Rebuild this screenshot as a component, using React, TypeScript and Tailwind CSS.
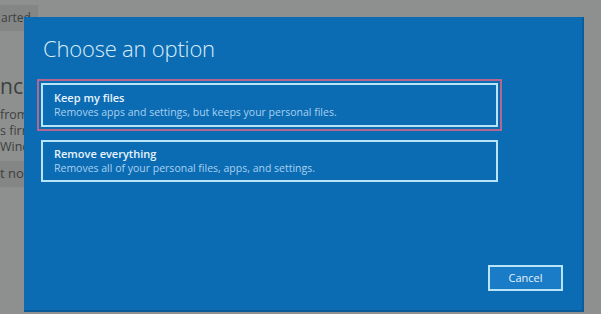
export default function App() {
  return (
    <div className="relative w-[601px] h-[314px] overflow-hidden bg-[#8d908f]" style={{ fontFamily: '"Open Sans", "Noto Sans", sans-serif' }}>
      {/* underlying page (faded) */}
      <div className="flex flex-col text-[#3d3f3e] whitespace-nowrap">
        <div className="mt-[5px] w-[38px] h-[26px] bg-[#838685] flex items-center overflow-hidden pl-[1px] text-[12px]">arted</div>
        <div className="mt-[43px] w-[24px] overflow-hidden text-[21px] leading-[24px]">nce</div>
        <div className="mt-[9px] w-[24px] overflow-hidden text-[12.5px] leading-[16px]">
          <div>from</div>
          <div>s firm</div>
          <div>Wind</div>
        </div>
        <div className="mt-[6px] w-[24px] h-[26px] bg-[#838685] flex items-center overflow-hidden text-[13px]">t now</div>
      </div>

      {/* modal dialog */}
      <div className="absolute left-[24px] top-[17px] w-[560px] h-[295px] bg-[#0b6cb4] border-r-2 border-b-2 border-[#0a5c99] flex flex-col text-[#dcecf8]">
        <div className="ml-[19px] mt-[16px] text-[22px] leading-[30px] font-light tracking-[-0.2px]">Choose an option</div>
        <div className="mt-[16px] ml-[13px] w-[465px] p-[2px] border-2 border-[#b3678c]">
          <div className="border-2 border-[#b8e4f8] h-[44px] pl-[11px] flex flex-col justify-center">
            <div className="text-[11px] leading-[15px] font-semibold text-[#e8f3fb]">Keep my files</div>
            <div className="text-[10.5px] leading-[15px] text-[#a9d1ef]">Removes apps and settings, but keeps your personal files.</div>
          </div>
        </div>
        <div className="mt-[9px] ml-[17px] w-[457px] border-2 border-[#b8e4f8] h-[42px] pl-[11px] flex flex-col justify-center">
          <div className="text-[11px] leading-[15px] font-semibold text-[#e8f3fb]">Remove everything</div>
          <div className="text-[10.5px] leading-[15px] text-[#a9d1ef]">Removes all of your personal files, apps, and settings.</div>
        </div>
        <div className="flex-1" />
        <div className="flex justify-end mr-[19px] mb-[19px]">
          <div className="w-[75px] h-[26px] border-2 border-[#b8e4f8] bg-[#1a7cc7] flex items-center justify-center text-[11px] text-[#e8f3fb]">Cancel</div>
        </div>
      </div>
    </div>
  );
}
